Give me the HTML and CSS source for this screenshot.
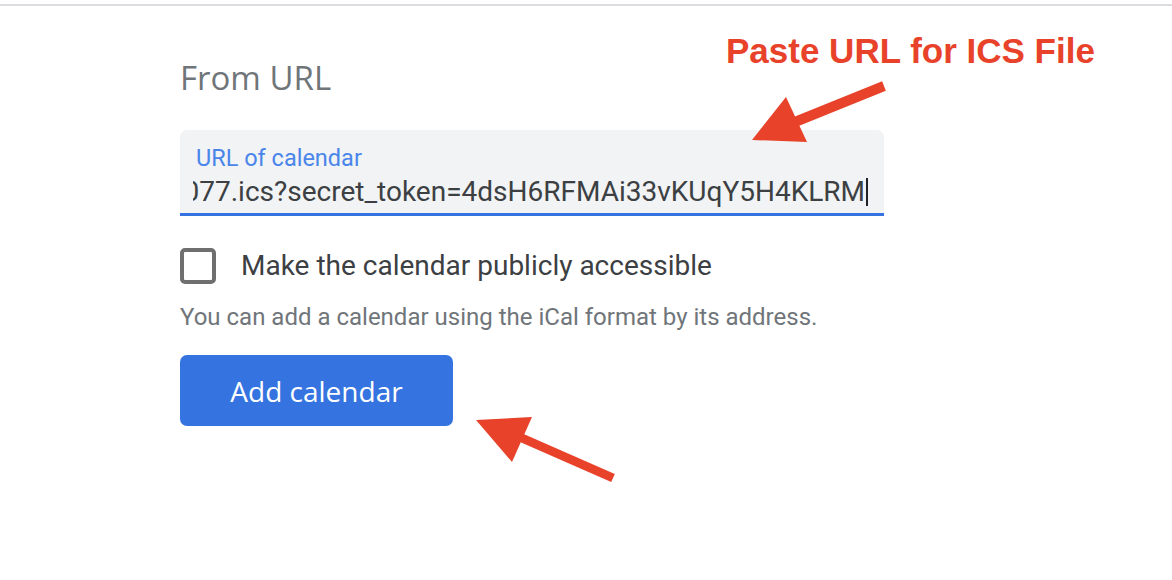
FILE: index.html
```html
<!DOCTYPE html>
<html lang="en">
<head>
<meta charset="utf-8">
<title>From URL</title>
<link rel="stylesheet" href="styles.css">
</head>
<body>
<div class="topline"></div>
<main class="panel">
  <h2 class="title">From URL</h2>
  <div class="field">
    <div class="field-label">URL of calendar</div>
    <div class="field-value"><span class="value-text">https://example.instructure.com/feeds/calendars/user_1077.ics?secret_token=4dsH6RFMAi33vKUqY5H4KLRM</span><span class="caret"></span></div>
  </div>
  <label class="check-row">
    <span class="checkbox"></span>
    <span class="check-label">Make the calendar publicly accessible</span>
  </label>
  <p class="hint">You can add a calendar using the iCal format by its address.</p>
  <button class="btn">Add calendar</button>
</main>

<div class="annotation-text">Paste URL for ICS File</div>
<svg class="arrows" width="1172" height="580" viewBox="0 0 1172 580">
  <line x1="884" y1="86" x2="790" y2="124" stroke="#e8432a" stroke-width="10"/>
  <polygon points="752,140 786,97 807,142" fill="#e8432a"/>
  <line x1="613" y1="478" x2="515" y2="435" stroke="#e8432a" stroke-width="9"/>
  <polygon points="476,420 532,417 512,462" fill="#e8432a"/>
</svg>
</body>
</html>
```

FILE: styles.css
```css
html, body {
  margin: 0;
  padding: 0;
  background: #ffffff;
}

body {
  position: relative;
  width: 1172px;
  height: 580px;
  overflow: hidden;
  font-family: Roboto, "Liberation Sans", sans-serif;
}

.topline {
  height: 2px;
  margin-top: 4px;
  background: #dadce0;
}

.panel {
  width: 704px;
  margin-left: 180px;
  display: flex;
  flex-direction: column;
  align-items: flex-start;
}

.title {
  margin: 51px 0 0 0;
  font-family: "Open Sans", Roboto, sans-serif;
  font-weight: 400;
  font-size: 33px;
  line-height: 42px;
  color: #70757a;
}

.field {
  margin-top: 31px;
  width: 704px;
  height: 83px;
  box-sizing: content-box;
  background: #f1f3f4;
  border-radius: 7px 7px 0 0;
  border-bottom: 3px solid #3574e0;
  display: flex;
  flex-direction: column;
  overflow: hidden;
}

.field-label {
  margin: 15px 0 0 16px;
  font-size: 23.5px;
  line-height: 26px;
  color: #4a85ea;
}

.field-value {
  margin: 5px 16px 0 13px;
  display: flex;
  justify-content: flex-end;
  align-items: center;
  overflow: hidden;
  white-space: nowrap;
  height: 32px;
}

.value-text {
  font-size: 28px;
  line-height: 32px;
  color: #3c4043;
}

.caret {
  flex: none;
  width: 2px;
  height: 28px;
  background: #202124;
  margin-left: 1px;
}

.check-row {
  margin-top: 32px;
  display: flex;
  align-items: center;
  gap: 25px;
}

.checkbox {
  width: 28px;
  height: 28px;
  border: 4px solid #6f6f6f;
  border-radius: 5px;
}

.check-label {
  font-size: 28px;
  line-height: 36px;
  color: #3c4043;
}

.hint {
  margin: 18px 0 0 0;
  font-size: 24px;
  line-height: 30px;
  color: #70757a;
}

.btn {
  margin-top: 23px;
  width: 273px;
  height: 71px;
  border: none;
  border-radius: 7px;
  background: #3574e0;
  color: #ffffff;
  font-family: "Open Sans", Roboto, sans-serif;
  font-weight: 500;
  font-size: 28px;
  padding: 0;
}

.annotation-text {
  position: absolute;
  left: 726px;
  top: 31px;
  font-family: "Liberation Sans", Arial, sans-serif;
  font-weight: 700;
  font-size: 35px;
  line-height: 40px;
  color: #e8432a;
  white-space: nowrap;
}

.arrows {
  position: absolute;
  left: 0;
  top: 0;
  pointer-events: none;
}
```
